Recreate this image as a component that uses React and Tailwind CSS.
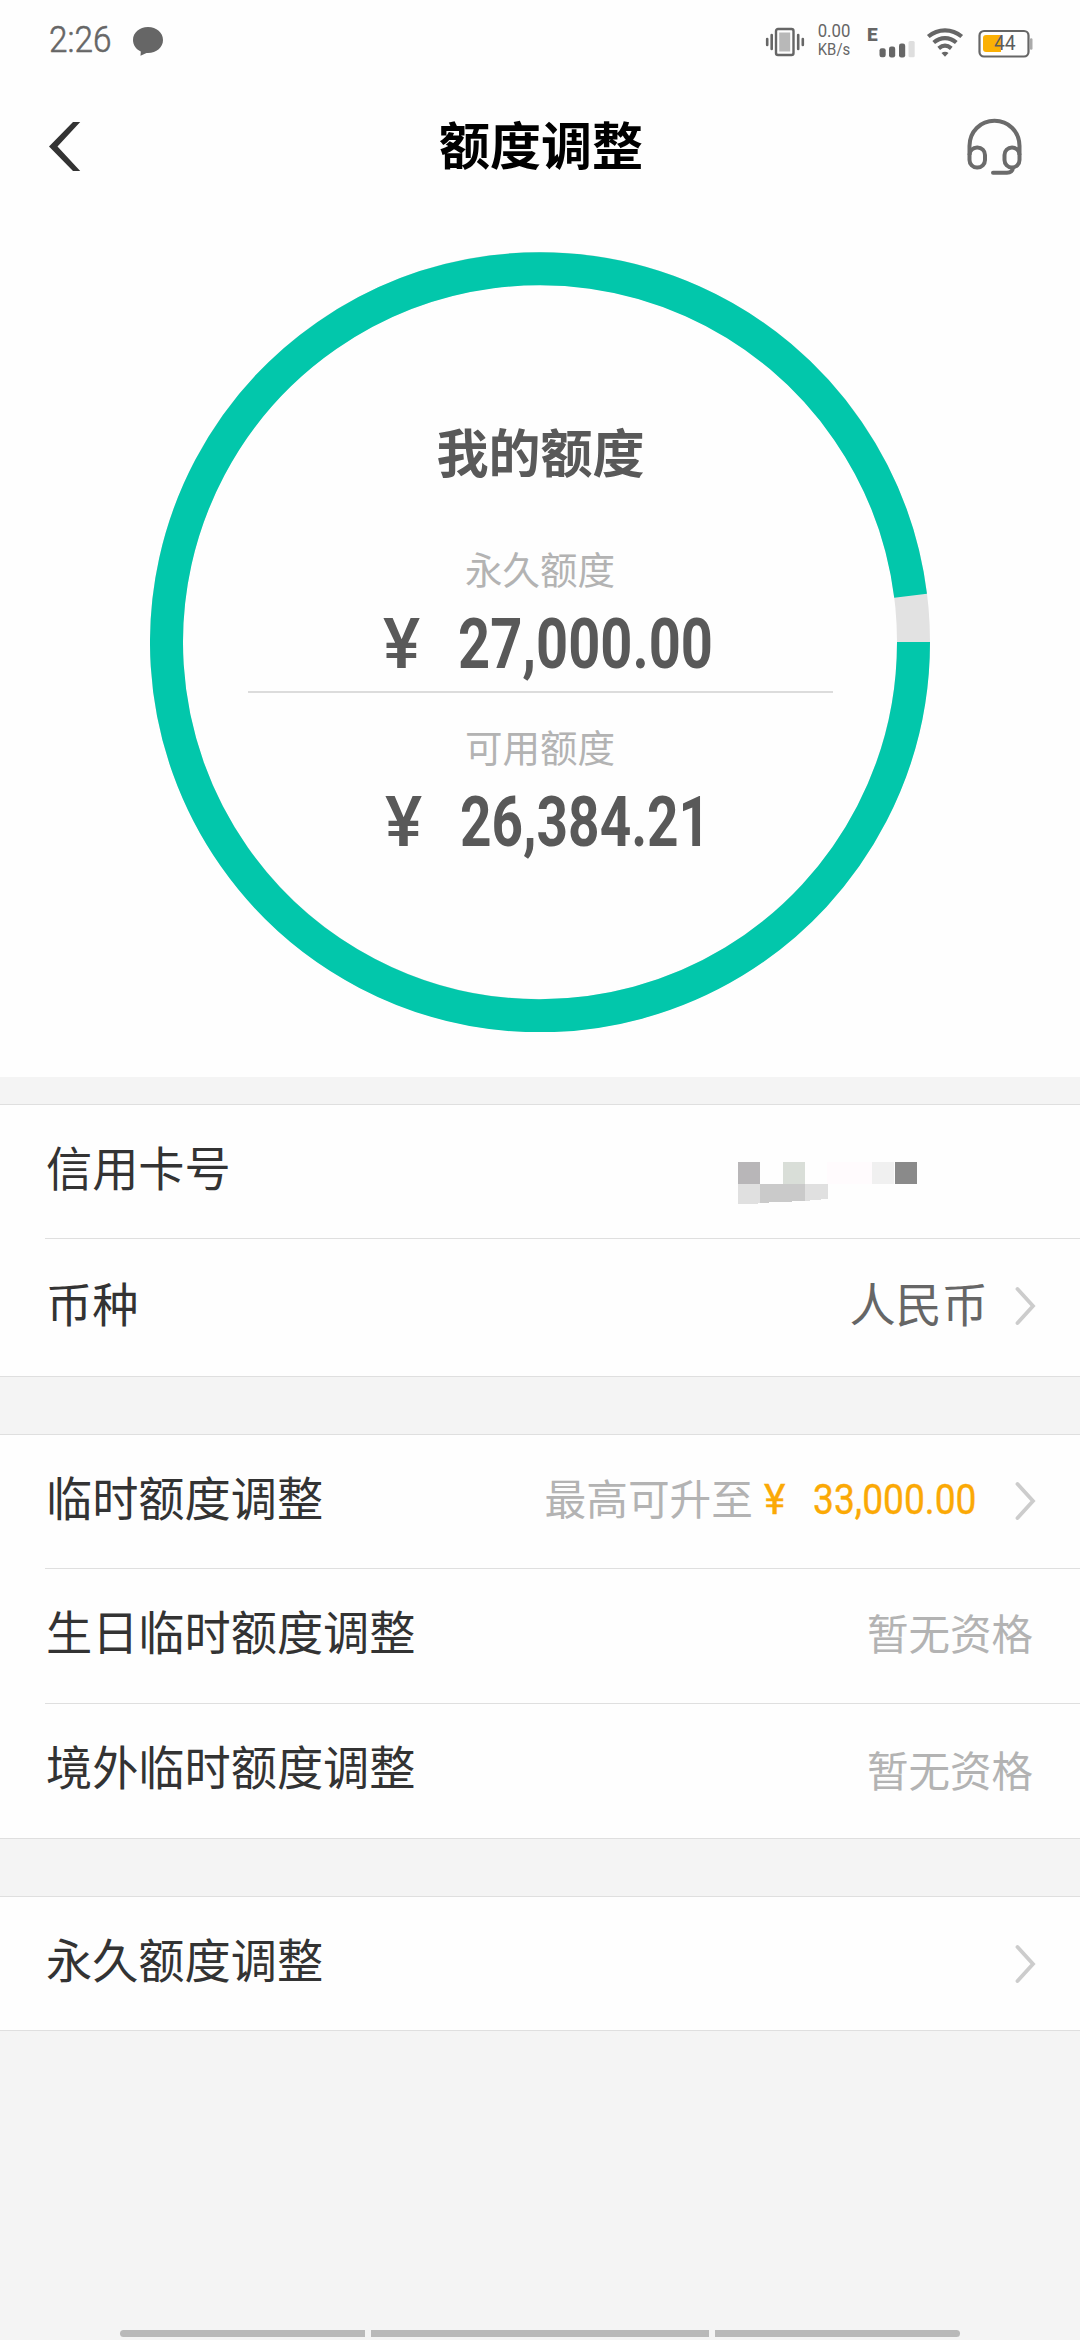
import React from "react";

const CJK = "font-['Noto_Sans_CJK_SC',sans-serif]";

function Chevron() {
  return (
    <svg width="24" height="42" viewBox="0 0 24 42" fill="none" stroke="#cccccc" strokeWidth="3.8" strokeLinecap="round" strokeLinejoin="miter">
      <path d="M4.500 4 L20 21 L4.500 38" />
    </svg>
  );
}

function StatusBar() {
  return (
    <div className="flex h-[84px] items-start justify-between pl-[49px] pr-[46px] text-[#666666]">
      <div className="flex pt-[18px]">
        <div className="h-[44px] w-[79px]">
          <span className="inline-block origin-left scale-x-[0.9] font-[Roboto,sans-serif] text-[37px] font-light leading-[44px] [-webkit-text-stroke:0.6px_#666666]">2:26</span>
        </div>
        <svg className="ml-[4px] mt-[8px]" width="32" height="31" viewBox="0 0 32 31" fill="#666666">
          <path d="M16 1C7.500 1 1 6.600 1 14c0 5 3 9.200 7.800 11.400L8.500 29.800l6-2.900c9.500.6 16.500-5.200 16.500-12.900C31 6.600 24.500 1 16 1z" />
        </svg>
      </div>
      <div className="flex pt-[22px]">
        <svg className="mt-[5px]" width="40" height="30" viewBox="0 0 40 30" fill="none" stroke="#666666">
          <rect x="11" y="2" width="17.500" height="26" rx="2" strokeWidth="2.400" />
          <rect x="14.200" y="5.500" width="11" height="19" fill="#b8b8b8" stroke="none" />
          <path d="M2.200 12v6M37.800 12v6M6.700 8v14M33.200 8v14" strokeWidth="2.600" strokeLinecap="round" />
        </svg>
        <div className="ml-[9px] w-[40px] text-center font-[Roboto,sans-serif] text-[18px] leading-[18px]">
          <div className="scale-x-[0.93]">0.00</div>
          <div className="mt-px scale-x-[0.93] text-[16px] leading-[18px]">KB/s</div>
        </div>
        <div className="relative ml-[13px] mt-[4px] h-[34px] w-[49px]">
          <span className="absolute left-0 top-[-2px] font-[Roboto,sans-serif] text-[19px] font-black leading-[22px]">E</span>
          <svg width="49" height="34" viewBox="0 0 49 34" fill="#666666">
            <rect x="12.500" y="22.300" width="6.200" height="9" rx="2.200" />
            <rect x="22" y="20.500" width="6.200" height="11" rx="2.200" />
            <rect x="32" y="17.500" width="6.200" height="14" rx="2.200" />
            <rect x="41.500" y="15" width="6.200" height="16.300" rx="1.500" fill="#dedede" />
          </svg>
        </div>
        <svg className="ml-[10px] mt-[5px]" width="38" height="31" viewBox="0 0 38 31" fill="none" stroke="#666666" strokeWidth="4.200">
          <path d="M2.300 9.500C12 1.200 26 1.200 35.700 9.500" />
          <path d="M7.700 15.500c7-5.800 15.600-5.800 22.600 0" />
          <path d="M12.700 21.300c4-3.300 8.600-3.300 12.600 0" />
          <path d="M15.500 26c2-1.800 5-1.800 7 0L19 29.800z" fill="#666666" stroke="none" />
        </svg>
        <div className="relative ml-[14px] mt-[7px]">
          <svg width="56" height="30" viewBox="0 0 56 30" fill="none">
            <rect x="1.500" y="2" width="49" height="25.500" rx="4.500" stroke="#666666" strokeWidth="2.200" />
            <path d="M8 6h15v17H8a3 3 0 0 1-3-3V9a3 3 0 0 1 3-3z" fill="#fbb004" />
            <path d="M53.200 10.500v9" stroke="#aaaaaa" strokeWidth="2.600" strokeLinecap="round" />
          </svg>
          <span className="absolute left-[16px] top-[3px] font-[Roboto,sans-serif] text-[21px] leading-[22px] text-[#5c5c5c]">
            <span className="inline-block origin-left scale-x-[0.92]">44</span>
          </span>
        </div>
      </div>
    </div>
  );
}

function Header() {
  return (
    <div className="grid h-[126px] grid-cols-[1fr_auto_1fr] items-start pl-[47px] pr-[45px]">
      <svg className="mt-[37px]" width="58" height="52" viewBox="0 0 58 52" fill="#333333">
        <path d="M26 1h7.200L10.500 25.500 33.200 50H26L2 25.500z" />
      </svg>
      <h1 className="pt-[23px] text-[51px] font-bold leading-[72px] text-black">额度调整</h1>
      <svg className="mr-[11px] mt-[33px] justify-self-end" width="58" height="60" viewBox="0 0 58 60" fill="none" stroke="#6b6b6b" strokeWidth="4">
        <path d="M3.500 38V29C3.500 14.500 14.500 3.800 28.500 3.800S53.500 14.500 53.500 29V38" />
        <rect x="3.500" y="30.500" width="15.500" height="20" rx="7.500" />
        <rect x="38.500" y="30.500" width="15" height="20" rx="7.500" />
        <path d="M47 51c-.5 3.200-2 4.700-6 4.700H27" strokeLinecap="round" />
      </svg>
    </div>
  );
}

function Amount({ value, start, squeeze }) {
  return (
    <div className={"flex h-[70px] w-[780px] items-center whitespace-nowrap font-[Roboto,sans-serif] text-[70px] font-bold leading-[70px] text-[#595959] " + start}>
      <span className="w-[75px]">
        <span className="inline-block origin-left font-medium">¥</span>
      </span>
      <span className={"inline-block origin-left " + squeeze}>{value}</span>
    </div>
  );
}

function QuotaRing() {
  return (
    <div className="grid h-[867px] justify-center pt-[42px]">
      <svg className="col-start-1 row-start-1" width="780" height="780" viewBox="0 0 780 780" fill="none" strokeWidth="33">
        <circle cx="390" cy="390" r="373.500" stroke="#e2e2e2" />
        <path d="M763.500 390A373.500 373.500 0 1 1 760.600 343.800" stroke="#02c7ab" />
      </svg>
      <div className="col-start-1 row-start-1 flex flex-col items-center pt-[161px]">
        <div className="pl-px text-[52px] font-bold leading-[76px] text-[#595959]">我的额度</div>
        <div className="mt-[52px] text-[37.500px] leading-[54px] text-[#b3b3b3]">永久额度</div>
        <div className="mt-[14px]"><Amount value="27,000.00" start="pl-[233px]" squeeze="scale-x-[0.8]" /></div>
        <div className="mt-[12px] h-[2px] w-[585px] bg-[#dcdcdc]" />
        <div className="mt-[26px] text-[37.500px] leading-[54px] text-[#b3b3b3]">可用额度</div>
        <div className="mt-[14px]"><Amount value="26,384.21" start="pl-[235px]" squeeze="scale-x-[0.785]" /></div>
      </div>
    </div>
  );
}

function MaskedNumber() {
  return (
    <svg className="mr-[162px] mt-[37px]" width="180" height="44" viewBox="0 0 180 44" shapeRendering="crispEdges">
      <rect x="0" y="0" width="22.400" height="22.400" fill="#b8b6b8" />
      <rect x="44.800" y="0" width="22.400" height="22.400" fill="#d9ded8" />
      <rect x="89" y="0" width="45" height="22.400" fill="#fffbfd" />
      <rect x="134" y="0" width="22.400" height="22.400" fill="#f0f0f0" />
      <rect x="156.500" y="0" width="22.400" height="22.400" fill="#8a8a8a" />
      <path d="M0 22.400h22.400v19L0 42.300z" fill="#e0e0e0" />
      <path d="M22.400 22.400h44.800v16.500l-44.800 2z" fill="#cacaca" />
      <path d="M67.200 22.400h22.400v14.500l-22.400 2z" fill="#e0e0e0" />
    </svg>
  );
}

function Row({ label, height, last, children }) {
  return (
    <div className={"ml-[45px] box-border flex items-center justify-between pb-[12px] " + height + (last ? "" : " border-b border-[#dfdfdf]")}>
      <span className="pl-px text-[46.200px] leading-[60px] text-[#333333]">{label}</span>
      {children}
    </div>
  );
}

export default function App() {
  return (
    <div className={"flex h-[2340px] w-[1080px] flex-col overflow-hidden bg-[#f4f4f4] " + CJK}>
      <div className="bg-[#fefefe]">
        <StatusBar />
        <Header />
        <QuotaRing />
      </div>

      <div className="mt-[27px] border-y border-[#dfdfdf] bg-[#fefefe]">
        <Row label="信用卡号" height="h-[134px]">
          <MaskedNumber />
        </Row>
        <Row label="币种" height="h-[137px]" last>
          <div className="flex items-center gap-[25px] pr-[43px]">
            <span className="text-[46.200px] leading-[60px] text-[#666666]">人民币</span>
            <div className="pt-[9px]"><Chevron /></div>
          </div>
        </Row>
      </div>

      <div className="mt-[57px] border-y border-[#dfdfdf] bg-[#fefefe]">
        <Row label="临时额度调整" height="h-[134px]">
          <div className="flex items-center pr-[43px] text-[#fba905]">
            <span className="pt-[3px] text-[41.700px] leading-[60px] text-[#b3b3b3]">最高可升至</span>
            <span className="ml-[11px] mt-[3px] w-[49px] whitespace-nowrap text-[43px] leading-[60px]">
              <span className="inline-block origin-left scale-x-[0.95] font-[Roboto,sans-serif] [-webkit-text-stroke:0.4px_#fba905]">¥</span>
            </span>
            <span className="mt-[3px] w-[165px] whitespace-nowrap text-[43px] leading-[60px]">
              <span className="inline-block origin-left scale-x-[0.865] font-[Roboto,sans-serif] [-webkit-text-stroke:0.4px_#fba905]">33,000.00</span>
            </span>
            <div className="ml-[35px] pt-[11px]"><Chevron /></div>
          </div>
        </Row>
        <Row label="生日临时额度调整" height="h-[135px]">
          <span className="pr-[47px] pt-[4px] text-[41.500px] leading-[60px] text-[#b3b3b3]">暂无资格</span>
        </Row>
        <Row label="境外临时额度调整" height="h-[134px]" last>
          <span className="pr-[47px] pt-[8px] text-[41.500px] leading-[60px] text-[#b3b3b3]">暂无资格</span>
        </Row>
      </div>

      <div className="mt-[57px] border-y border-[#dfdfdf] bg-[#fefefe]">
        <Row label="永久额度调整" height="h-[133px]" last>
          <div className="pr-[43px] pt-[12px]"><Chevron /></div>
        </Row>
      </div>

      <div className="mb-[3px] mt-auto flex justify-center gap-[6px]">
        <div className="h-[7px] w-[245px] rounded-l-full bg-[#b9b9b9]" />
        <div className="h-[7px] w-[338px] bg-[#b9b9b9]" />
        <div className="h-[7px] w-[245px] rounded-r-full bg-[#b9b9b9]" />
      </div>
    </div>
  );
}
